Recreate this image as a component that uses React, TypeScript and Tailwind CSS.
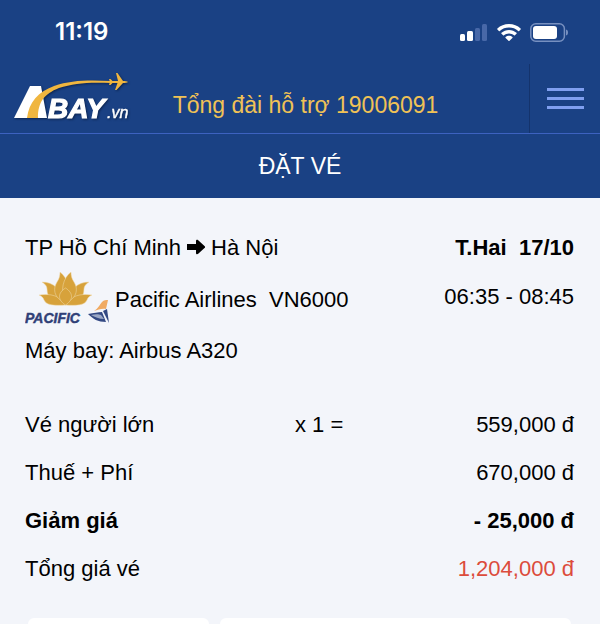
type PriceRow = {
  label: string;
  quantity?: string;
  amount: string;
  className?: string;
  amountClassName?: string;
}

const prices: PriceRow[] = [
  { label: "Vé người lớn", quantity: "x 1 =", amount: "559,000 đ" },
  { label: "Thuế + Phí", amount: "670,000 đ" },
  { label: "Giảm giá", amount: "- 25,000 đ", className: "font-bold" },
  { label: "Tổng giá vé", amount: "1,204,000 đ", amountClassName: "text-[#dc4c3c]" },
]

function StatusBar() {
  return (
    <div className="flex h-16 items-center justify-between pr-8 pl-[55px]">
      <span className="font-['Inter',sans-serif] text-2xl font-semibold text-white">11:19</span>
      <div className="flex items-center gap-[9px]">
        <svg className="h-[17px] w-7" viewBox="0 0 28 17" aria-hidden="true">
          <rect x="0" y="10" width="5" height="7" rx="1.5" fill="#fff" />
          <rect x="7" y="7" width="6" height="10" rx="1.5" fill="#fff" />
          <rect x="15" y="4" width="5" height="13" rx="1.5" fill="#4868a8" />
          <rect x="22" y="0" width="5" height="17" rx="1.5" fill="#4868a8" />
        </svg>
        <svg className="h-[17px] w-6" viewBox="0 0 24 17" fill="#fff" aria-hidden="true">
          <path d="M12 0C7.500 0 3.400 1.700.4 4.500c-.3.300-.3.600 0 .9l1.500 1.500c.3.300.6.300.9 0C5.300 4.700 8.500 3.500 12 3.500s6.700 1.200 9.200 3.400c.3.300.6.300.9 0l1.500-1.500c.3-.3.300-.6 0-.9C20.600 1.700 16.500 0 12 0Z" />
          <path d="M12 6c-2.900 0-5.500 1.100-7.500 2.800-.3.300-.3.700 0 1l1.600 1.500c.3.300.6.200.9 0 1.400-1.200 3.100-1.900 5-1.900s3.600.7 5 1.900c.3.200.6.300.9 0l1.600-1.500c.3-.3.300-.7 0-1C17.500 7.100 14.900 6 12 6Z" />
          <path d="M12 11.800c-1.300 0-2.500.5-3.400 1.200-.3.300-.3.600 0 .9l2.900 2.900c.3.300.7.300 1 0l2.900-2.900c.3-.3.300-.6 0-.9-.9-.7-2.100-1.200-3.400-1.200Z" />
        </svg>
        <svg className="h-[19px] w-[38px]" viewBox="0 0 38 19" aria-hidden="true">
          <rect x=".8" y=".8" width="33.600" height="17.400" rx="5" fill="none" stroke="#7790c0" strokeWidth="1.500" />
          <rect x="3" y="3" width="24" height="13" rx="3" fill="#fff" />
          <path d="M36 6.500c1.500.4 2 1.500 2 3s-.5 2.600-2 3Z" fill="#7790c0" />
        </svg>
      </div>
    </div>
  )
}

function AbayLogo() {
  return (
    <svg
      className="h-[52px] w-[116px] drop-shadow-[1px_1px_1px_#0c2450]"
      viewBox="14 73 116 52"
      role="img"
      aria-label="Abay.vn"
    >
      <path d="M14 118 30 86h11l6 32Z" fill="#fff" />
      <path d="M27 118c2-16 11-26 27-32 17-6 35-6 57-5v2c-22-1-37 0-52 5-15 6-21 14-21 30Z" fill="#f0b63f" />
      <path d="M109 79h1.500l2 2h5.500l-2-8h1.500l5.500 8c2 0 4 .4 5 1-1 .6-3 1-5 1l-6.500 7H115l2.500-7h-5l-2 2H109l1-3Z" fill="#f0b63f" />
      <g fill="#fff" stroke="#fff" className="font-['Liberation_Sans',Arial,sans-serif] italic">
        <text x="48" y="118" fontSize="28" fontWeight="700" strokeWidth="1.200">BAY</text>
        <text x="107" y="118" fontSize="16" strokeWidth=".4">.vn</text>
      </g>
    </svg>
  )
}

function PacificLogo() {
  return (
    <svg className="h-[54px] w-[84px]" viewBox="25 271 84 54" role="img" aria-label="Pacific">
      <g fill="#d7a23b" stroke="#f0dcb0" strokeWidth=".5">
        <path d="M42 281c11 0 20 7 23 22-12 1-18-6-18-15 0-3-2-5-5-7Z" />
        <path d="M89 281c-11 0-20 7-23 22 12 1 18-6 18-15 0-3 2-5 5-7Z" />
        <path d="M39 294c11-2 22 1 27 10-12 1-20 0-22-5-1-3-3-4-5-5Z" />
        <path d="M92 294c-11-2-22 1-27 10 12 1 20 0 22-5 1-3 3-4 5-5Z" />
        <path d="M60 271c8 6 11 18 6 31-11-4-14-13-9-21 2-3 3-6 3-10Z" />
        <path d="M71 271c-8 6-11 18-6 31 11-4 14-13 9-21-2-3-3-6-3-10Z" />
        <path d="M65.500 287c-8 5-8 12 0 17 8-5 8-12 0-17Z" />
      </g>
      <text
        x="25"
        y="322"
        fontSize="14"
        fill="#303f77"
        stroke="#303f77"
        strokeWidth=".4"
        className="font-['Liberation_Sans',Arial,sans-serif] font-bold italic"
      >
        PACIFIC
      </text>
      <path d="M94 310c4-2 6-7 8-9 2-2 4-2 6-2l-2 9c-4-1-8 1-12 2Z" fill="#f0aa62" />
      <path d="M88 313c6-1 10-2 14-2l4 10c-8 0-13-3-18-8Z" fill="#334983" />
      <path d="M91 314c4-1 8-1 10 0l3 4c-5 0-9-2-13-4Z" fill="#9ba8c6" />
      <path d="m103 310 4-2 2 14Z" fill="#334983" />
    </svg>
  )
}

function Header() {
  return (
    <header className="bg-[#1a4184]">
      <StatusBar />
      <div className="flex h-[70px] border-b border-[#3d62c0] pl-3.5">
        <a href="#" className="flex items-center">
          <AbayLogo />
        </a>
        <div className="flex flex-1 items-center justify-center pt-3.5 pr-12">
          <a href="tel:19006091" className="text-[23px] whitespace-nowrap text-[#f0c256]">
            Tổng đài hỗ trợ 19006091
          </a>
        </div>
        <button
          type="button"
          aria-label="Menu"
          className="flex w-[71px] flex-col items-end justify-center gap-1.5 border-l border-[#14336c] pr-4"
        >
          <span className="h-[3px] w-[37px] bg-[#809ff0]"></span>
          <span className="h-[3px] w-[37px] bg-[#809ff0]"></span>
          <span className="h-[3px] w-[37px] bg-[#809ff0]"></span>
        </button>
      </div>
      <h1 className="flex h-16 items-center justify-center text-[23px] text-white">ĐẶT VÉ</h1>
    </header>
  )
}

function Flight() {
  return (
    <section className="flex flex-col">
      <div className="flex h-8 items-center justify-between">
        <div className="flex items-center gap-[5px]">
          <span>TP Hồ Chí Minh</span>
          <svg className="h-4 w-5" viewBox="0 0 20 16" aria-hidden="true">
            <path d="M1 5h9V2c0-1.200 1.200-1.700 2.200-.8l6.300 5.700c.8.800.8 1.400 0 2.200l-6.300 5.700c-1 .9-2.200.4-2.200-.8v-3H1Z" />
          </svg>
          <span>Hà Nội</span>
        </div>
        <span className="font-bold whitespace-pre">T.Hai  17/10</span>
      </div>
      <div className="flex h-[72px] items-center justify-between">
        <div className="flex items-center gap-1.5">
          <PacificLogo />
          <span className="whitespace-pre">Pacific Airlines  VN6000</span>
        </div>
        <span className="pb-1.5">06:35 - 08:45</span>
      </div>
      <div className="flex h-[30px] items-center">Máy bay: Airbus A320</div>
    </section>
  )
}

export default function App() {
  return (
    <div className="bg-[#f3f5fa] font-['Liberation_Sans',Arial,sans-serif] text-[22px] text-black">
      <Header />
      <main className="pt-[33px] pr-[26px] pl-[25px]">
        <Flight />
        <table className="mt-[35px] w-full">
          <tbody>
            {prices.map((row) => (
              <tr key={row.label} className={row.className ?? "font-normal"}>
                <th scope="row" className="h-12 w-[270px] text-left [font-weight:inherit]">{row.label}</th>
                <td>{row.quantity}</td>
                <td className={`text-right ${row.amountClassName ?? ""}`}>{row.amount}</td>
              </tr>
            ))}
          </tbody>
        </table>
        <div className="mt-[26px] flex gap-[11px] px-[3px]">
          <div className="h-1.5 w-1/3 rounded-t-md bg-white"></div>
          <div className="h-1.5 flex-1 rounded-t-md bg-white"></div>
        </div>
      </main>
    </div>
  )
}
